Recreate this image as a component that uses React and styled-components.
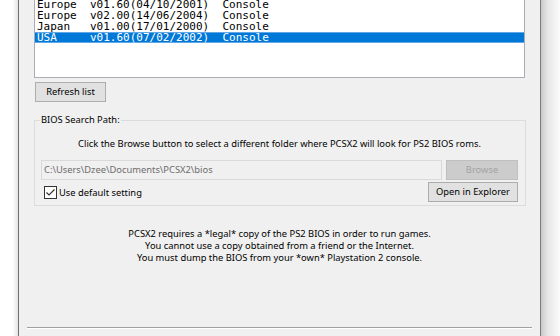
import React from "react";
import styled, { createGlobalStyle } from "styled-components";

const Global = createGlobalStyle`
  html, body { margin: 0; padding: 0; background: #ffffff; }
  body { font-family: "Noto Sans", "Open Sans", sans-serif; font-size: 9.35px; color: #000; }
  #root { width: 560px; height: 336px; }
`;

const Page = styled.div`
  display: flex;
  width: 560px;
  height: 336px;
  overflow: hidden;
  background: #fff;
`;

const LeftShade = styled.div`
  width: 18px;
  flex: none;
  background: linear-gradient(to right, #ffffff 0%, #ffffff 70%, #e4e4e4 100%);
`;

const RightShade = styled.div`
  flex: 1;
  background: linear-gradient(to right, #c9c9c9 0%, #e6e6e6 35%, #fbfbfb 100%);
`;

const Window = styled.div`
  width: 491px;
  flex: none;
  display: flex;
  flex-direction: column;
  background: #f0f0f0;
  border-left: 1px solid #6f6f6f;
  border-right: 1px solid #7b7b7b;
  padding: 0 15px;
  box-sizing: content-box;
`;

const ListBox = styled.div`
  margin-top: -3px;
  height: 78px;
  border: 1px solid #abadb3;
  background: #fff;
  padding-top: 1px;
  box-sizing: content-box;
`;

const Row = styled.div`
  height: 11px;
  line-height: 11px;
  padding-left: 2px;
  font-family: "DejaVu Sans Mono", "Liberation Mono", monospace;
  font-size: 11px;
  white-space: pre;
  overflow: hidden;
  color: ${(p) => (p.$selected ? "#ffffff" : "#000000")};
  background: ${(p) => (p.$selected ? "#0078d7" : "transparent")};
  box-shadow: ${(p) => (p.$selected ? "inset 0 1px 0 #5fa7e6, inset 0 -1px 0 #5fa7e6" : "none")};
`;

const Button = styled.button`
  height: 20px;
  width: ${(p) => p.$w}px;
  padding: 0;
  margin: 0;
  font-family: inherit;
  font-size: 9.35px;
  line-height: 18px;
  color: ${(p) => (p.disabled ? "#a3a3a3" : "#000")};
  background: ${(p) => (p.disabled ? "#cccccc" : "#e1e1e1")};
  border: 1px solid ${(p) => (p.disabled ? "#bfbfbf" : "#adadad")};
  border-radius: 0;
  flex: none;
`;

const RefreshButton = styled(Button)`
  margin-top: 4px;
  margin-left: 1px;
  align-self: flex-start;
`;

const Group = styled.fieldset`
  margin: 12px -1px 0 0;
  padding: 0 7px 3px 6px;
  border: 1px solid #dcdcdc;
  min-width: 0;
`;

const Legend = styled.legend`
  padding: 0 1px;
  margin-left: -1px;
  line-height: 12px;
`;

const Hint = styled.div`
  margin-top: 12px;
  text-align: center;
  line-height: 12px;
`;

const PathRow = styled.div`
  display: flex;
  gap: 4px;
  margin-top: 10px;
`;

const PathBox = styled.div`
  flex: 1;
  height: 20px;
  box-sizing: border-box;
  border: 1px solid #d9d9d9;
  background: #f0f0f0;
  color: #6d6d6d;
  line-height: 18px;
  padding-left: 2px;
  white-space: nowrap;
`;

const OptionRow = styled.div`
  display: flex;
  align-items: center;
  justify-content: space-between;
  margin-top: 2px;
`;

const CheckLabel = styled.label`
  display: flex;
  align-items: center;
  gap: 2px;
  padding-left: 3px;
`;

const Notice = styled.div`
  margin-top: 22px;
  text-align: center;
  line-height: 12px;
`;

const Footer = styled.div`
  margin: auto -7px 0;
  padding-bottom: 7px;
`;

const Separator = styled.div`
  border-top: 1px solid #a0a0a0;
  border-bottom: 1px solid #ffffff;
`;

function CheckBox() {
  return (
    <svg width="13" height="13" viewBox="0 0 13 13">
      <rect x="0.5" y="0.5" width="12" height="12" fill="#fff" stroke="#333" />
      <path d="M2.5 6.5 L5 9 L10.5 3.5" fill="none" stroke="#333" strokeWidth="1.2" />
    </svg>
  );
}

const rows = [
  ["Europe  ", "v01.60(04/10/2001)", "Console"],
  ["Europe  ", "v02.00(14/06/2004)", "Console"],
  ["Japan   ", "v01.00(17/01/2000)", "Console"],
  ["USA     ", "v01.60(07/02/2002)", "Console"],
];

export default function App() {
  return (
    <Page>
      <Global />
      <LeftShade />
      <Window>
        <ListBox>
          {rows.map((r, i) => (
            <Row key={i} $selected={i === 3}>
              {r[0] + r[1] + "  " + r[2]}
            </Row>
          ))}
        </ListBox>
        <RefreshButton $w={71}>Refresh list</RefreshButton>
        <Group>
          <Legend>BIOS Search Path:</Legend>
          <Hint>Click the Browse button to select a different folder where PCSX2 will look for PS2 BIOS roms.</Hint>
          <PathRow>
            <PathBox>C:\Users\Dzee\Documents\PCSX2\bios</PathBox>
            <Button $w={72} disabled>Browse</Button>
          </PathRow>
          <OptionRow>
            <CheckLabel>
              <CheckBox />
              Use default setting
            </CheckLabel>
            <Button $w={90}>Open in Explorer</Button>
          </OptionRow>
        </Group>
        <Notice>
          PCSX2 requires a *legal* copy of the PS2 BIOS in order to run games.
          <br />
          You cannot use a copy obtained from a friend or the Internet.
          <br />
          You must dump the BIOS from your *own* Playstation 2 console.
        </Notice>
        <Footer>
          <Separator />
        </Footer>
      </Window>
      <RightShade />
    </Page>
  );
}
